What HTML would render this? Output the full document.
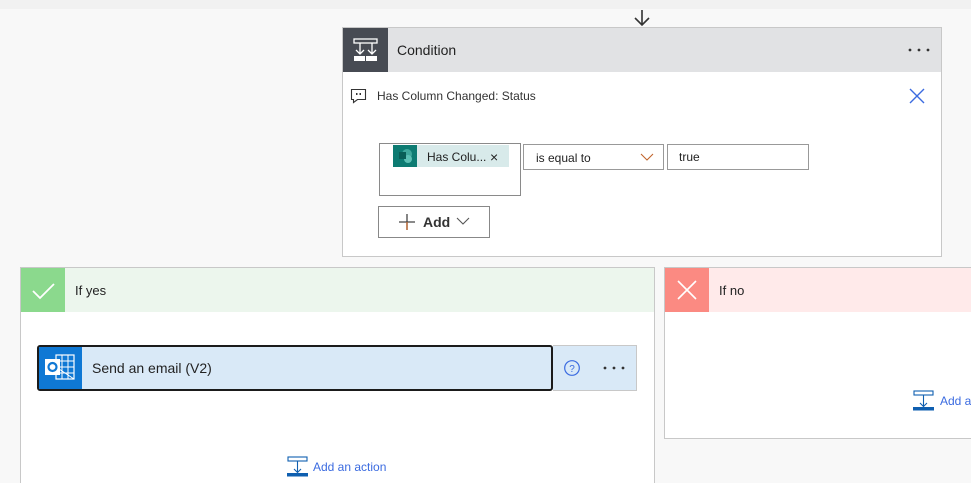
<!DOCTYPE html>
<html><head><style>
*{box-sizing:border-box;margin:0;padding:0}
html,body{width:971px;height:483px;overflow:hidden}
body{background:#f8f8f8;font-family:"Liberation Sans",sans-serif;position:relative;font-size:13px;color:#222}
.a{position:absolute}
</style></head><body>
<div class="a" style="left:0;top:0;width:971px;height:9px;background:#f1f1f1"></div>
<svg class="a" style="left:632px;top:9px" width="20" height="18"><path d="M10 1V16M3 9L10 16L17 9" stroke="#333" stroke-width="1.6" fill="none"/></svg>

<div class="a" style="left:342px;top:27px;width:600px;height:230px;background:#fff;border:1px solid #c8c8c8"></div>
<div class="a" style="left:343px;top:28px;width:598px;height:44px;background:#e1e2e4"></div>
<div class="a" style="left:343px;top:28px;width:45px;height:44px;background:#474b53"></div>
<svg class="a" style="left:343px;top:28px" width="45" height="44"><g stroke="#fff" fill="none" stroke-width="1.3"><rect x="11" y="11" width="23" height="4"/><path d="M17 15v10M13 22l4 4 4-4M29 15v10M25 22l4 4 4-4"/></g><rect x="11" y="28" width="11" height="5" fill="#fff"/><rect x="23" y="28" width="11" height="5" fill="#fff"/></svg>
<div class="a" style="left:397px;top:42px;font-size:14px;color:#222">Condition</div>
<svg class="a" style="left:906px;top:46px" width="26" height="8"><circle cx="4" cy="4" r="1.4" fill="#333"/><circle cx="13" cy="4" r="1.4" fill="#333"/><circle cx="22" cy="4" r="1.4" fill="#333"/></svg>
<svg class="a" style="left:350px;top:88px" width="18" height="16"><path d="M1.5 1.5h14v10h-8l-4 3v-3h-2z" fill="none" stroke="#333" stroke-width="1.1"/><rect x="6" y="5" width="1.5" height="2" fill="#333"/><rect x="9.5" y="5" width="1.5" height="2" fill="#333"/></svg>
<div class="a" style="left:377px;top:89px;font-size:12px;color:#333">Has Column Changed: Status</div>
<svg class="a" style="left:908px;top:87px" width="18" height="18"><path d="M2 2L16 16M16 2L2 16" stroke="#3b6be0" stroke-width="1.4"/></svg>

<div class="a" style="left:379px;top:143px;width:142px;height:53px;border:1px solid #8a8a8a;background:#fff"></div>
<div class="a" style="left:393px;top:145px;width:116px;height:22px;background:#d8eaea"></div>
<div class="a" style="left:393px;top:145px;width:24px;height:22px;background:#0d7b72"></div>
<svg class="a" style="left:393px;top:145px" width="24" height="22"><circle cx="14" cy="9" r="5" fill="#3fa89c"/><circle cx="15" cy="14" r="4" fill="#5cc0b4"/><rect x="6" y="7" width="7" height="7" fill="#095f57"/></svg>
<div class="a" style="left:427px;top:150px;font-size:12px">Has Colu...</div>
<div class="a" style="left:490px;top:149px;font-size:14px">×</div>
<div class="a" style="left:523px;top:144px;width:141px;height:26px;border:1px solid #999;background:#fff"></div>
<div class="a" style="left:536px;top:151px;font-size:12px">is equal to</div>
<svg class="a" style="left:640px;top:152px" width="14" height="10"><path d="M1 2l6 6 6-6" stroke="#c1652d" fill="none" stroke-width="1.1"/></svg>
<div class="a" style="left:667px;top:144px;width:142px;height:26px;border:1px solid #999;background:#fff"></div>
<div class="a" style="left:679px;top:150px;font-size:12px">true</div>
<div class="a" style="left:378px;top:206px;width:112px;height:32px;border:1px solid #888;background:#fff"></div>
<svg class="a" style="left:398px;top:213px" width="18" height="18"><path d="M9 1v16M1 9h16" stroke="#444" stroke-width="1.3"/><path d="M9 9v8" stroke="#c1652d" stroke-width="1.3"/></svg>
<div class="a" style="left:423px;top:214px;font-size:14px;font-weight:bold;color:#333">Add</div>
<svg class="a" style="left:456px;top:216px" width="14" height="10"><path d="M1 2l6 6 6-6" stroke="#555" fill="none" stroke-width="1.1"/></svg>

<div class="a" style="left:20px;top:267px;width:635px;height:230px;background:#fff;border:1px solid #c8c8c8"></div>
<div class="a" style="left:21px;top:268px;width:633px;height:44px;background:#ecf6ed"></div>
<div class="a" style="left:21px;top:268px;width:44px;height:44px;background:#8bd98d"></div>
<svg class="a" style="left:21px;top:268px" width="44" height="44"><path d="M12 23l7 7 14-14" stroke="#fff" stroke-width="1.8" fill="none"/></svg>
<div class="a" style="left:75px;top:283px;font-size:13px">If yes</div>
<div class="a" style="left:37px;top:345px;width:516px;height:46px;border:2px solid #1b1b1b;border-radius:3px;background:#d9e9f7;overflow:hidden">
<div style="position:absolute;left:0;top:0;width:43px;height:42px;background:#0f78d4"></div></div>
<svg class="a" style="left:39px;top:347px" width="43" height="42"><rect x="17" y="8" width="18" height="24" fill="none" stroke="#fff" stroke-width="1.2"/><path d="M17 14h18M17 20h18M17 26h18M23 8v24M29 8v24M17 20l18 12" stroke="#fff" stroke-width="1"/><rect x="6" y="12" width="15" height="16" fill="#fff"/><circle cx="13.5" cy="20" r="4" fill="none" stroke="#0f78d4" stroke-width="2.2"/></svg>
<div class="a" style="left:92px;top:360px;font-size:14px">Send an email (V2)</div>
<div class="a" style="left:553px;top:345px;width:84px;height:46px;background:#d9e9f7;border:1px solid #c8c8c8;border-left:none"></div>
<svg class="a" style="left:563px;top:359px" width="18" height="18"><circle cx="9" cy="9" r="7.3" fill="none" stroke="#3b6be0" stroke-width="1.2"/><text x="9" y="13" text-anchor="middle" font-size="10" fill="#3b6be0" font-family="Liberation Sans">?</text></svg>
<svg class="a" style="left:601px;top:364px" width="26" height="8"><circle cx="4" cy="4" r="1.4" fill="#333"/><circle cx="13" cy="4" r="1.4" fill="#333"/><circle cx="22" cy="4" r="1.4" fill="#333"/></svg>
<svg class="a" style="left:287px;top:456px" width="21" height="21"><rect x="1" y="1" width="19" height="4" fill="none" stroke="#0f5fb0" stroke-width="1.1"/><path d="M10.5 5v11M7 13l3.5 3.5L14 13" stroke="#0f5fb0" fill="none" stroke-width="1.1"/><rect x="0" y="17" width="21" height="3.5" fill="#0f5fb0"/></svg>
<div class="a" style="left:313px;top:460px;font-size:12px;color:#3b6be0">Add an action</div>

<div class="a" style="left:664px;top:267px;width:320px;height:172px;background:#fff;border:1px solid #c8c8c8"></div>
<div class="a" style="left:665px;top:268px;width:320px;height:44px;background:#ffeaea"></div>
<div class="a" style="left:665px;top:268px;width:44px;height:44px;background:#fb8a82"></div>
<svg class="a" style="left:665px;top:268px" width="44" height="44"><path d="M13 13l18 18M31 13L13 31" stroke="#fff" stroke-width="1.6"/></svg>
<div class="a" style="left:719px;top:283px;font-size:13px">If no</div>
<svg class="a" style="left:913px;top:390px" width="21" height="21"><rect x="1" y="1" width="19" height="4" fill="none" stroke="#0f5fb0" stroke-width="1.1"/><path d="M10.5 5v11M7 13l3.5 3.5L14 13" stroke="#0f5fb0" fill="none" stroke-width="1.1"/><rect x="0" y="17" width="21" height="3.5" fill="#0f5fb0"/></svg>
<div class="a" style="left:940px;top:394px;font-size:12px;color:#3b6be0;white-space:nowrap">Add an action</div>
</body></html>
